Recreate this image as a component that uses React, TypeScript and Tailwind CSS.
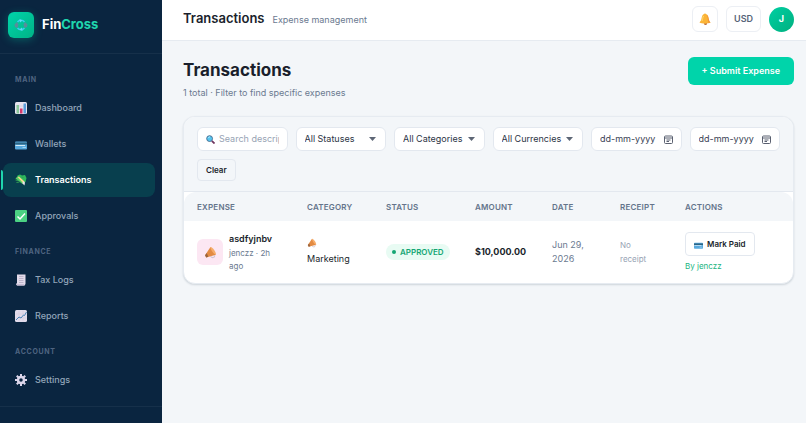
import classNames from "clsx";
import type { ReactNode } from "react";

const navSections = [
  {
    title: "Main",
    items: [
      { label: "Dashboard", icon: <BarChartIcon /> },
      { label: "Wallets", icon: <CardIcon className="size-3" /> },
      { label: "Transactions", icon: <MoneyIcon />, active: true },
      { label: "Approvals", icon: <CheckIcon /> },
    ],
  },
  {
    title: "Finance",
    items: [
      { label: "Tax Logs", icon: <ReceiptIcon /> },
      { label: "Reports", icon: <TrendIcon /> },
    ],
  },
  {
    title: "Account",
    items: [{ label: "Settings", icon: <GearIcon /> }],
  },
];

const columns = [
  { label: "Expense", width: "w-[110px]" },
  { label: "Category", width: "w-[79px]" },
  { label: "Status", width: "w-[89px]" },
  { label: "Amount", width: "w-[77px]" },
  { label: "Date", width: "w-[68px]" },
  { label: "Receipt", width: "w-[65px]" },
  { label: "Actions", width: "" },
];

const App = () => {
  return (
    <div className="flex min-h-screen bg-[#f3f6f9] font-['Inter',sans-serif] text-[#1a1f2c]">
      <Sidebar />
      <div className="flex min-w-0 flex-1 flex-col">
        <Topbar />
        <main className="pt-4 pr-3 pb-6 pl-[21px]">
          <div className="flex items-start justify-between">
            <div>
              <h1 className="text-[17px] leading-[26px] font-bold">Transactions</h1>
              <p className="mt-0.5 text-[9px] leading-4 text-[#6b7a90]">
                1 total · Filter to find specific expenses
              </p>
            </div>
            <button
              type="button"
              className="h-7 rounded-md bg-[#00d4aa] px-3.5 text-[9px] font-semibold text-white"
            >
              + Submit Expense
            </button>
          </div>
          <section className="mt-[15px] overflow-hidden rounded-xl border border-[#e6ebf1] bg-white shadow-[0_1px_2px_rgba(10,37,64,0.16)]">
            <Filters />
            <ExpenseTable />
          </section>
        </main>
      </div>
    </div>
  );
};

export default App;

const Sidebar = () => (
  <aside className="flex w-[162px] shrink-0 flex-col bg-[#0a2540]">
    <div className="flex h-[54px] items-center gap-2 border-b border-white/5 px-2 pb-[3px]">
      <span className="flex size-[26px] items-center justify-center rounded-md bg-linear-to-br from-[#00d4aa] to-[#00b386] shadow-[0_2px_8px_rgba(0,212,170,0.3)]">
        <LogoIcon />
      </span>
      <span className="text-[13px] font-bold text-white">
        Fin<span className="text-[#1fd6ae]">Cross</span>
      </span>
    </div>
    <nav className="flex flex-col gap-[13px] pt-5 pr-[7px] pb-[9px] pl-[3px]">
      {navSections.map((section) => (
        <div key={section.title}>
          <h2 className="mb-[5px] px-3 text-[7px] leading-3 font-bold tracking-widest text-[#4f6480] uppercase">
            {section.title}
          </h2>
          <ul className="flex flex-col gap-0.5">
            {section.items.map((item) => (
              <NavItem key={item.label} {...item} />
            ))}
          </ul>
        </div>
      ))}
    </nav>
    <div className="h-4 border-t border-white/5" />
  </aside>
);

const NavItem = ({
  label,
  icon,
  active,
}: {
  label: string;
  icon: ReactNode;
  active?: boolean;
}) => (
  <li className="relative">
    {active && (
      <span className="absolute top-[7px] -left-0.5 h-5 w-0.5 rounded-r bg-[#1fd6ae]" />
    )}
    <a
      href="#"
      className={classNames(
        "flex h-[34px] items-center gap-2 rounded-lg px-3 text-[9px]",
        active
          ? "bg-[#083f4e] font-semibold text-white"
          : "font-medium text-[#93a5ba]"
      )}
    >
      {icon}
      {label}
    </a>
  </li>
);

const Topbar = () => (
  <header className="flex h-[41px] items-center justify-between border-b border-[#e6ebf1] bg-white pr-3 pb-0.5 pl-[21px]">
    <div className="flex items-baseline gap-2">
      <span className="text-[13px] font-semibold">Transactions</span>
      <span className="text-[9px] text-[#6b7a90]">Expense management</span>
    </div>
    <div className="flex items-center gap-2">
      <button
        type="button"
        aria-label="Notifications"
        className="flex size-[26px] items-center justify-center rounded-md border border-[#eceff4]"
      >
        <BellIcon />
      </button>
      <button
        type="button"
        className="h-[26px] rounded-md border border-[#eceff4] px-[7px] text-[9px] font-semibold text-[#566378]"
      >
        USD
      </button>
      <button
        type="button"
        className="size-[25px] rounded-full bg-linear-to-br from-[#00cfa3] to-[#00b07f] text-[9px] font-bold text-white"
      >
        J
      </button>
    </div>
  </header>
);

const Filters = () => (
  <form className="grid grid-cols-6 items-start gap-2 border-b border-[#e3e8ef] bg-[#f3f6f9] px-[13px] py-2.5">
    <label className="flex h-6 items-center gap-1 rounded-md border border-[#e3e8ef] bg-white px-2">
      <SearchIcon />
      <input
        type="text"
        aria-label="Search description"
        placeholder="Search description"
        className="min-w-0 flex-1 text-[9px] outline-none placeholder:text-[#97a3b4]"
      />
    </label>
    <FilterSelect label="All Statuses" />
    <FilterSelect label="All Categories" />
    <FilterSelect label="All Currencies" />
    <DateField label="From date" />
    <DateField label="To date" />
    <button
      type="reset"
      className="h-[22px] justify-self-start rounded border border-[#e3e8ef] px-2 text-[8px] font-semibold"
    >
      Clear
    </button>
  </form>
);

const FilterSelect = ({ label }: { label: string }) => (
  <div className="relative">
    <select
      aria-label={label}
      className="block h-6 w-full appearance-none rounded-md border border-[#e3e8ef] bg-white px-2 text-[9px] text-[#2b3345]"
    >
      <option>{label}</option>
    </select>
    <svg
      className="pointer-events-none absolute top-2.5 right-2.5 h-1 w-[7px] fill-[#5d6675]"
      viewBox="0 0 7 4"
      aria-hidden="true"
    >
      <path d="M0 0h7L3.500 4Z" />
    </svg>
  </div>
);

const DateField = ({ label }: { label: string }) => (
  <label className="flex h-6 items-center gap-1 rounded-md border border-[#e3e8ef] bg-white px-2">
    <input
      type="text"
      aria-label={label}
      placeholder="dd-mm-yyyy"
      className="min-w-0 flex-1 text-[9px] outline-none placeholder:text-[#3a4254]"
    />
    <CalendarIcon />
  </label>
);

const ExpenseTable = () => (
  <div className="overflow-hidden rounded-t-xl">
    <table className="w-full table-fixed text-left text-[9px]">
      <thead className="bg-[#f3f6f9]">
        <tr>
          {columns.map((column) => (
            <th
              key={column.label}
              className={classNames(
                "h-[29px] px-[13px] text-[8px] font-semibold tracking-wide text-[#64748b] uppercase",
                column.width
              )}
            >
              {column.label}
            </th>
          ))}
        </tr>
      </thead>
      <tbody>
        <tr className="h-[62px]">
          <td className="pl-[13px]">
            <div className="flex items-center gap-1.5">
              <span className="flex size-[26px] shrink-0 items-center justify-center rounded-md bg-[#fce7f3]">
                <MegaphoneIcon className="size-[13px]" />
              </span>
              <div>
                <div className="text-[9px] leading-4 font-semibold">asdfyjnbv</div>
                <div className="w-12 text-[8px] leading-[13px] text-[#6b7a90]">
                  jenczz · 2h ago
                </div>
              </div>
            </div>
          </td>
          <td className="px-[13px] leading-[14px]">
            <MegaphoneIcon className="mb-1 size-2.5" />
            Marketing
          </td>
          <td className="px-[13px]">
            <span className="inline-flex h-4 items-center gap-1 rounded-full bg-[#e8fbf3] px-1.5 text-[8px] font-semibold text-[#14a673] uppercase">
              <span className="size-1 rounded-full bg-[#14a673]" />
              Approved
            </span>
          </td>
          <td className="px-[13px] text-[9px] font-bold">$10,000.00</td>
          <td className="px-[13px] leading-[14px] text-[#6b7a90]">Jun 29, 2026</td>
          <td className="px-[13px] text-[8px] leading-[14px] text-[#97a3b4]">No receipt</td>
          <td className="px-[13px]">
            <button
              type="button"
              className="flex h-6 items-center gap-1 rounded border border-[#e3e8ef] px-2 text-[8px] font-semibold"
            >
              <CardIcon className="size-[9px]" />
              Mark Paid
            </button>
            <div className="mt-1 text-[8px] leading-3 text-[#21b47f]">By jenczz</div>
          </td>
        </tr>
      </tbody>
    </table>
  </div>
);

function LogoIcon() {
  return (
    <svg className="size-3.5" viewBox="0 0 28 28" fill="none" aria-hidden="true">
      <path d="M7 8a9 9 0 0 1 14 0M21 20a9 9 0 0 1-14 0" stroke="#38cdf0" strokeWidth="3" />
      <path d="M1 13l5-5 3 5-2 7-5-2Z" fill="#5a8c9c" />
      <path d="M27 13l-5-5-3 5 2 7 5-2Z" fill="#5a8c9c" />
      <path d="M11 2l6 3-5 4ZM17 26l-6-3 5-4Z" fill="#62dcf5" />
    </svg>
  );
}

function BarChartIcon() {
  return (
    <svg className="size-3" viewBox="0 0 24 24" aria-hidden="true">
      <rect width="24" height="24" rx="3" fill="#e8e4f0" />
      <path d="M1 8h22M1 15h22" stroke="#cbc5d9" />
      <rect x="3" y="6" width="5" height="17" fill="#8cc79b" />
      <rect x="10" y="13" width="5" height="10" fill="#d8396c" />
      <rect x="17" y="3" width="5" height="20" fill="#5b9edb" />
    </svg>
  );
}

function CardIcon({ className }: { className: string }) {
  return (
    <svg className={className} viewBox="0 0 24 24" aria-hidden="true">
      <rect y="7" width="24" height="16" rx="2" fill="#58a9de" />
      <path d="M0 9h24v4H0Z" fill="#2c6484" />
      <path d="M1 14h19v2H1Z" fill="#d5ebf7" />
      <path d="M15 18h7v2h-7Z" fill="#9fd2f0" />
    </svg>
  );
}

function MoneyIcon() {
  return (
    <svg className="size-3" viewBox="0 0 24 24" aria-hidden="true">
      <path d="M5 3l5-2 4 2 6-1 3 6-2 8-5 1L4 8Z" fill="#2eb85c" />
      <path d="M1 9l4-4 14 12-4 3Z" fill="#54ce62" />
      <path d="M5 6l3-1 11 10-2 4Z" fill="#f5d98c" />
      <path d="M16 14l4 3-1 6-4-4Z" fill="#e9e3ea" />
      <path d="M1 12l5 1M3 17l6-1M13 6l4 1" stroke="#2f9d55" strokeWidth="2" />
    </svg>
  );
}

function CheckIcon() {
  return (
    <svg className="size-3" viewBox="0 0 24 24" fill="none" aria-hidden="true">
      <rect width="24" height="24" rx="2" fill="#4bd183" />
      <path d="M5 13l5 5L20 7" stroke="#fff" strokeWidth="3" />
    </svg>
  );
}

function ReceiptIcon() {
  return (
    <svg className="size-3" viewBox="0 0 24 24" aria-hidden="true">
      <path d="M4 1h17v19l-2 3H4l-2-3 2-2Z" fill="#e3dbea" />
      <path d="M8 5h9M8 9h9M8 13h9M8 17h9" stroke="#bfb5cb" strokeWidth="2" />
      <path d="M2 20h16l1 3H4Z" fill="#c9bdd5" />
    </svg>
  );
}

function TrendIcon() {
  return (
    <svg className="size-3" viewBox="0 0 24 24" fill="none" aria-hidden="true">
      <rect width="24" height="24" rx="3" fill="#e2dcec" />
      <path d="M1 8h22M1 16h22M8 1v22M16 1v22" stroke="#d1cade" />
      <path d="M2 20l6-6 4 2 5-6 2 1 4-7" stroke="#4a84b8" strokeWidth="2" />
    </svg>
  );
}

function GearIcon() {
  return (
    <svg className="size-3" viewBox="0 0 24 24" fill="none" aria-hidden="true">
      <circle cx="12" cy="12" r="6" stroke="#dcd6ea" strokeWidth="5" />
      <path
        d="M12 0v5M12 19v5M0 12h5M19 12h5M3.500 3.500l4 4M16.500 16.500l4 4M3.500 20.500l4-4M16.500 7.500l4-4"
        stroke="#dcd6ea"
        strokeWidth="4"
      />
    </svg>
  );
}

function BellIcon() {
  return (
    <svg className="size-3" viewBox="0 0 24 24" aria-hidden="true">
      <circle cx="12" cy="3" r="2" fill="#f3ad35" />
      <circle cx="13" cy="21" r="3" fill="#b9683c" />
      <path d="M12 2c-5 0-6 4-7 9-.5 4-2 5-4 8 4 3 18 3 22 0-3-3-3-5-4-9-1-5-2-8-7-8Z" fill="#fbb437" />
      <path d="M15 4c3 3 2 10 4 16l4-1c-3-3-3-5-4-9-1-4-1-5-4-6Z" fill="#f1943b" />
      <path d="M9 6c-2 3-1 6-3 10" stroke="#ffda70" strokeWidth="2" fill="none" />
    </svg>
  );
}

function SearchIcon() {
  return (
    <svg className="size-[9px] shrink-0" viewBox="0 0 20 20" aria-hidden="true">
      <path d="M13 13l6 6" stroke="#70365f" strokeWidth="4" />
      <circle cx="8" cy="8" r="6.500" fill="#55c5ef" stroke="#46698c" strokeWidth="2" />
      <path d="M5 7a4 4 0 0 1 4-3" stroke="#b4ebff" strokeWidth="2" fill="none" />
    </svg>
  );
}

function CalendarIcon() {
  return (
    <svg className="size-[9px] shrink-0" viewBox="0 0 18 18" fill="none" aria-hidden="true">
      <rect x="1" y="2" width="16" height="15" rx="2" stroke="#5a6070" strokeWidth="2" />
      <path d="M1 6h16M5 10h8M5 13h5" stroke="#5a6070" strokeWidth="2" />
    </svg>
  );
}

function MegaphoneIcon({ className }: { className: string }) {
  return (
    <svg className={className} viewBox="0 0 24 24" aria-hidden="true">
      <path d="M12 19c3 4 8 3 8-2" stroke="#cfc5d2" strokeWidth="2" fill="none" />
      <path d="M12 2L2 17l2 4 18-5Z" fill="#e38b43" />
      <path d="M12 2c3-1 11 10 10 14-3 1-11-10-10-14Z" fill="#f6ad6b" />
      <path d="M2 17l3-4 3 7-4 1Z" fill="#99643f" />
    </svg>
  );
}
